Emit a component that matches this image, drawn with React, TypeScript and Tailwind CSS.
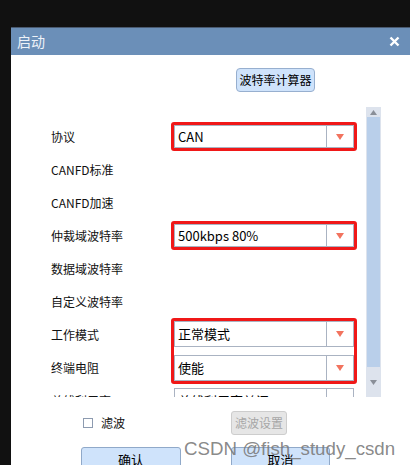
const font = { fontFamily: '"Noto Sans CJK SC", "Noto Sans", sans-serif' };

function Arrow() {
  return (
    <svg width="8" height="6" viewBox="0 0 8 6">
      <path d="M0 0 L8 0 L4 6 Z" fill="#f2735e" />
    </svg>
  );
}

function Select({ value, tall }: { value: string; tall?: boolean }) {
  return (
    <div
      className={`flex w-[180px] items-center border border-[#aab3c2] bg-white ${
        tall ? "h-[26px]" : "h-[23px]"
      }`}
    >
      <span className="flex-1 whitespace-nowrap pl-[3px] text-[13px] leading-[18px] text-black">{value}</span>
      <div className="flex h-full w-[27px] items-center justify-center border-l border-[#aab3c2]">
        <Arrow />
      </div>
    </div>
  );
}

function Row({ label, children }: { label: string; children?: React.ReactNode }) {
  return (
    <div className="flex h-[33px] items-center">
      <div className="w-[160px] shrink-0 whitespace-nowrap pl-[40px] text-[12px] text-[#111]">{label}</div>
      {children}
    </div>
  );
}

function Scrollbar() {
  return (
    <div className="flex w-[15px] flex-col bg-[#dde3ed]">
      <div className="flex h-[10px] items-center justify-center">
        <svg width="7" height="5" viewBox="0 0 7 5">
          <path d="M0 5 L7 5 L3.5 0 Z" fill="#8a8f98" />
        </svg>
      </div>
      <div className="mx-[1px] h-[250px] bg-[#b9cfea]" />
      <div className="flex flex-1 items-center justify-center">
        <svg width="7" height="5" viewBox="0 0 7 5">
          <path d="M0 0 L7 0 L3.5 5 Z" fill="#8a8f98" />
        </svg>
      </div>
    </div>
  );
}

export default function App() {
  return (
    <div className="relative h-[465px] w-[410px] overflow-hidden bg-[#111111]" style={font}>
      <div className="ml-[11px] mt-[27px] h-[438px] bg-white">
        <div className="flex h-[28px] items-center justify-between border-t border-[#4a5a70] bg-[#6b8fb8] pl-[6px] pr-[10px]">
          <span className="text-[14px] text-[#eef2f8]">启动</span>
          <svg width="11" height="11" viewBox="0 0 11 11">
            <path d="M1.5 1.5 L9.5 9.5 M9.5 1.5 L1.5 9.5" stroke="#ffffff" strokeWidth="2.4" />
          </svg>
        </div>

        <div className="flex pl-[225px] pt-[13px]">
          <button className="flex h-[24px] w-[79px] items-center justify-center whitespace-nowrap rounded-[4px] border border-[#97afcf] bg-[#cfe3fb] text-[12px] text-black">
            波特率计算器
          </button>
        </div>

        <div className="mt-[15px] flex h-[290px]">
          <div className="w-[355px] overflow-hidden pt-[13px]">
            <Row label="协议">
              <div className="rounded-[3px] border-[3px] border-[#f01818]">
                <Select value="CAN" />
              </div>
            </Row>
            <Row label="CANFD标准" />
            <Row label="CANFD加速" />
            <Row label="仲裁域波特率">
              <div className="rounded-[3px] border-[3px] border-[#f01818]">
                <Select value="500kbps 80%" />
              </div>
            </Row>
            <Row label="数据域波特率" />
            <Row label="自定义波特率" />
            <div className="flex">
              <div className="w-[160px] shrink-0">
                <div className="flex h-[33px] items-center pl-[40px] text-[12px] text-[#111]">工作模式</div>
                <div className="flex h-[33px] items-center pl-[40px] text-[12px] text-[#111]">终端电阻</div>
              </div>
              <div className="flex h-[66px] flex-col gap-[8px] rounded-[3px] border-[3px] border-[#f01818]">
                <Select value="正常模式" tall />
                <Select value="使能" tall />
              </div>
            </div>
            <Row label="总线利用率">
              <div className="border-[3px] border-transparent">
                <Select value="总线利用率关闭" tall />
              </div>
            </Row>
          </div>
          <Scrollbar />
        </div>

        <div className="mt-[14px] flex h-[24px] items-center">
          <div className="ml-[72px] h-[10px] w-[10px] border border-[#8d9bb0] bg-white" />
          <span className="ml-[8px] text-[12px] text-[#111]">滤波</span>
          <button className="ml-[106px] flex h-[24px] w-[56px] items-center justify-center whitespace-nowrap rounded-[3px] border border-[#cdcdcd] bg-[#e6e6e6] text-[12px] text-[#a6a6a6]">
            滤波设置
          </button>
        </div>

        <div className="mt-[12px] flex">
          <button className="ml-[70px] flex h-[26px] w-[100px] items-center justify-center rounded-[3px] border border-[#90a9c9] bg-[#cfe3fb] text-[13px] text-black">
            确认
          </button>
          <button className="ml-[50px] flex h-[26px] w-[99px] items-center justify-center rounded-[3px] border border-[#90a9c9] bg-[#cfe3fb] text-[13px] text-black">
            取消
          </button>
        </div>
      </div>

      <div
        className="absolute left-[184px] top-[435px] whitespace-nowrap text-[18.7px] text-[#7b7b7b]/90"
        style={{ fontFamily: '"Liberation Sans", Arial, sans-serif' }}
      >
        CSDN @fish_study_csdn
      </div>
    </div>
  );
}
